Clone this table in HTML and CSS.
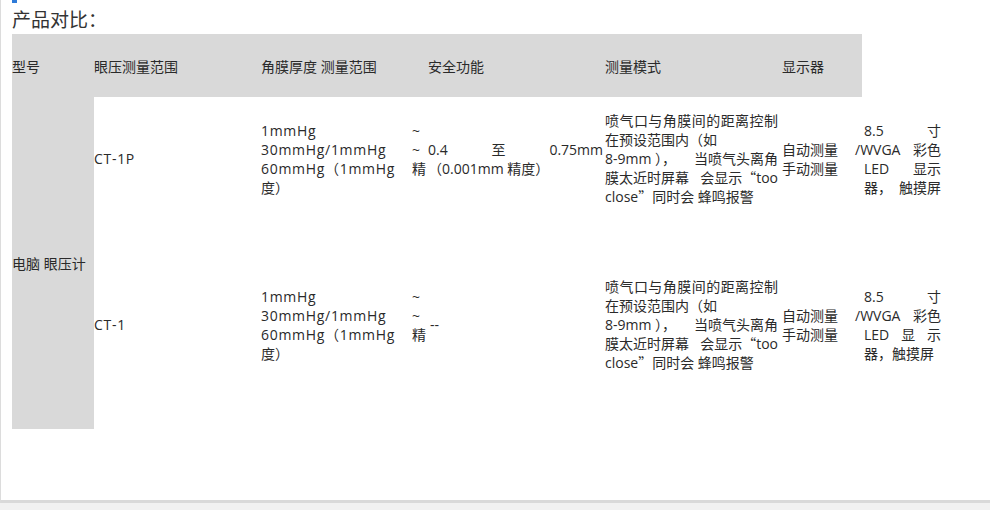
FILE: index.html
```html
<!DOCTYPE html>
<html lang="zh-CN">
<head>
<meta charset="utf-8">
<title>产品对比</title>
<link rel="stylesheet" href="styles.css">
</head>
<body>
<div class="frame">
  <div class="mark"></div>
  <h2 class="title">产品对比：</h2>
  <table class="cmp">
    <colgroup>
      <col class="c1"><col class="c2"><col class="c3"><col class="c4"><col class="c5"><col class="c6"><col class="c7">
    </colgroup>
    <thead>
      <tr>
        <th>型号</th>
        <th>眼压测量范围</th>
        <th>角膜厚度 测量范围</th>
        <th>安全功能</th>
        <th>测量模式</th>
        <th>显示器</th>
      </tr>
    </thead>
    <tbody>
      <tr>
        <td class="name" rowspan="2">电脑 眼压计</td>
        <td class="cell model">CT-1P</td>
        <td class="cell p3">
          <span class="j"><span class="lat">1mmHg</span><span class="t">~</span></span>
          <span class="j"><span class="lat">30mmHg/1mmHg</span><span class="t">~</span></span>
          <span class="j"><span class="lat">60mmHg（1mmHg</span><span>精</span></span>
          <span class="l">度）</span>
        </td>
        <td class="cell p4">
          <span class="j"><span>0.4</span><span>至</span><span>0.75mm</span></span>
          <span class="l">（0.001mm 精度）</span>
        </td>
        <td class="cell p5">
          <span class="jc">喷气口与角膜间的距离控制</span>
          <span class="l">在预设范围内（如</span>
          <span class="j"><span>8-9mm ），</span><span>当喷气头离角</span></span>
          <span class="j"><span>膜太近时屏幕</span><span>会显示<span class="q">“</span>too</span></span>
          <span class="l">close<span class="q">”</span>同时会 蜂鸣报警</span>
        </td>
        <td class="cell">
          <span class="l">自动测量</span>
          <span class="l">手动测量</span>
        </td>
        <td class="cell p7">
          <span class="j"><span>8.5</span><span>寸</span></span>
          <span class="j out"><span>/WVGA</span><span>彩色</span></span>
          <span class="j"><span>LED</span><span>显示</span></span>
          <span class="j"><span>器，</span><span>触摸屏</span></span>
        </td>
      </tr>
      <tr>
        <td class="cell model">CT-1</td>
        <td class="cell p3">
          <span class="j"><span class="lat">1mmHg</span><span class="t">~</span></span>
          <span class="j"><span class="lat">30mmHg/1mmHg</span><span class="t">~</span></span>
          <span class="j"><span class="lat">60mmHg（1mmHg</span><span>精</span></span>
          <span class="l">度）</span>
        </td>
        <td class="cell p4 dash">--</td>
        <td class="cell p5">
          <span class="jc">喷气口与角膜间的距离控制</span>
          <span class="l">在预设范围内（如</span>
          <span class="j"><span>8-9mm ），</span><span>当喷气头离角</span></span>
          <span class="j"><span>膜太近时屏幕</span><span>会显示<span class="q">“</span>too</span></span>
          <span class="l">close<span class="q">”</span>同时会 蜂鸣报警</span>
        </td>
        <td class="cell">
          <span class="l">自动测量</span>
          <span class="l">手动测量</span>
        </td>
        <td class="cell p7">
          <span class="j"><span>8.5</span><span>寸</span></span>
          <span class="j out"><span>/WVGA</span><span>彩色</span></span>
          <span class="j"><span>LED</span><span>显</span><span>示</span></span>
          <span class="l">器，触摸屏</span>
        </td>
      </tr>
    </tbody>
  </table>
</div>
</body>
</html>
```

FILE: styles.css
```css
html, body {
  margin: 0;
  padding: 0;
  background: #f1f1f1;
}

body {
  font-family: "Open Sans", "Noto Sans CJK SC", sans-serif;
  color: #2a2a2a;
  font-size: 14px;
}

.frame {
  height: 503px;
  box-sizing: border-box;
  background: #fff;
  border-left: 1px solid #dcdcdc;
  border-bottom: 3px solid #d9d9d9;
  padding-left: 11px;
}

.mark {
  width: 5px;
  height: 3px;
  background: #2f7bd8;
}

.title {
  margin: 0;
  font-size: 19px;
  font-weight: normal;
  line-height: 31px;
  color: #333;
  font-family: "Noto Sans CJK SC", sans-serif;
}

.cmp {
  border-collapse: collapse;
  border-spacing: 0;
  table-layout: fixed;
  width: 932px;
}

.c1 { width: 82px; }
.c2 { width: 167px; }
.c3 { width: 167px; }
.c4 { width: 177px; }
.c5 { width: 177px; }
.c6 { width: 80px; }
.c7 { width: 82px; }

.cmp th {
  background: #d9d9d9;
  height: 63px;
  padding: 2px 0 0 0;
  box-sizing: border-box;
  font-weight: normal;
  text-align: left;
  vertical-align: middle;
  line-height: 19px;
}

.cmp td {
  padding: 0;
  vertical-align: middle;
  line-height: 19px;
  text-align: left;
}

.name {
  background: #d9d9d9;
}

.cell {
  height: 166px;
  box-sizing: border-box;
  padding-bottom: 43px !important;
}

.j, .l, .jc {
  display: block;
  white-space: nowrap;
}

.j {
  display: flex;
  justify-content: space-between;
}

.jc {
  text-align: justify;
  text-align-last: justify;
}

.lat,
.model {
  letter-spacing: 0.7px;
}

.t {
  margin-right: 6px;
}

.q {
  font-family: "Noto Sans CJK SC", sans-serif;
}

.p3 { padding-right: 2px !important; }
.p4 { padding-right: 2px !important; }
.p5 { padding-right: 4px !important; }
.p7 { padding-left: 2px !important; padding-right: 3px !important; }

.out {
  margin-left: -9px;
}

.dash {
  padding-left: 2px !important;
}
```
